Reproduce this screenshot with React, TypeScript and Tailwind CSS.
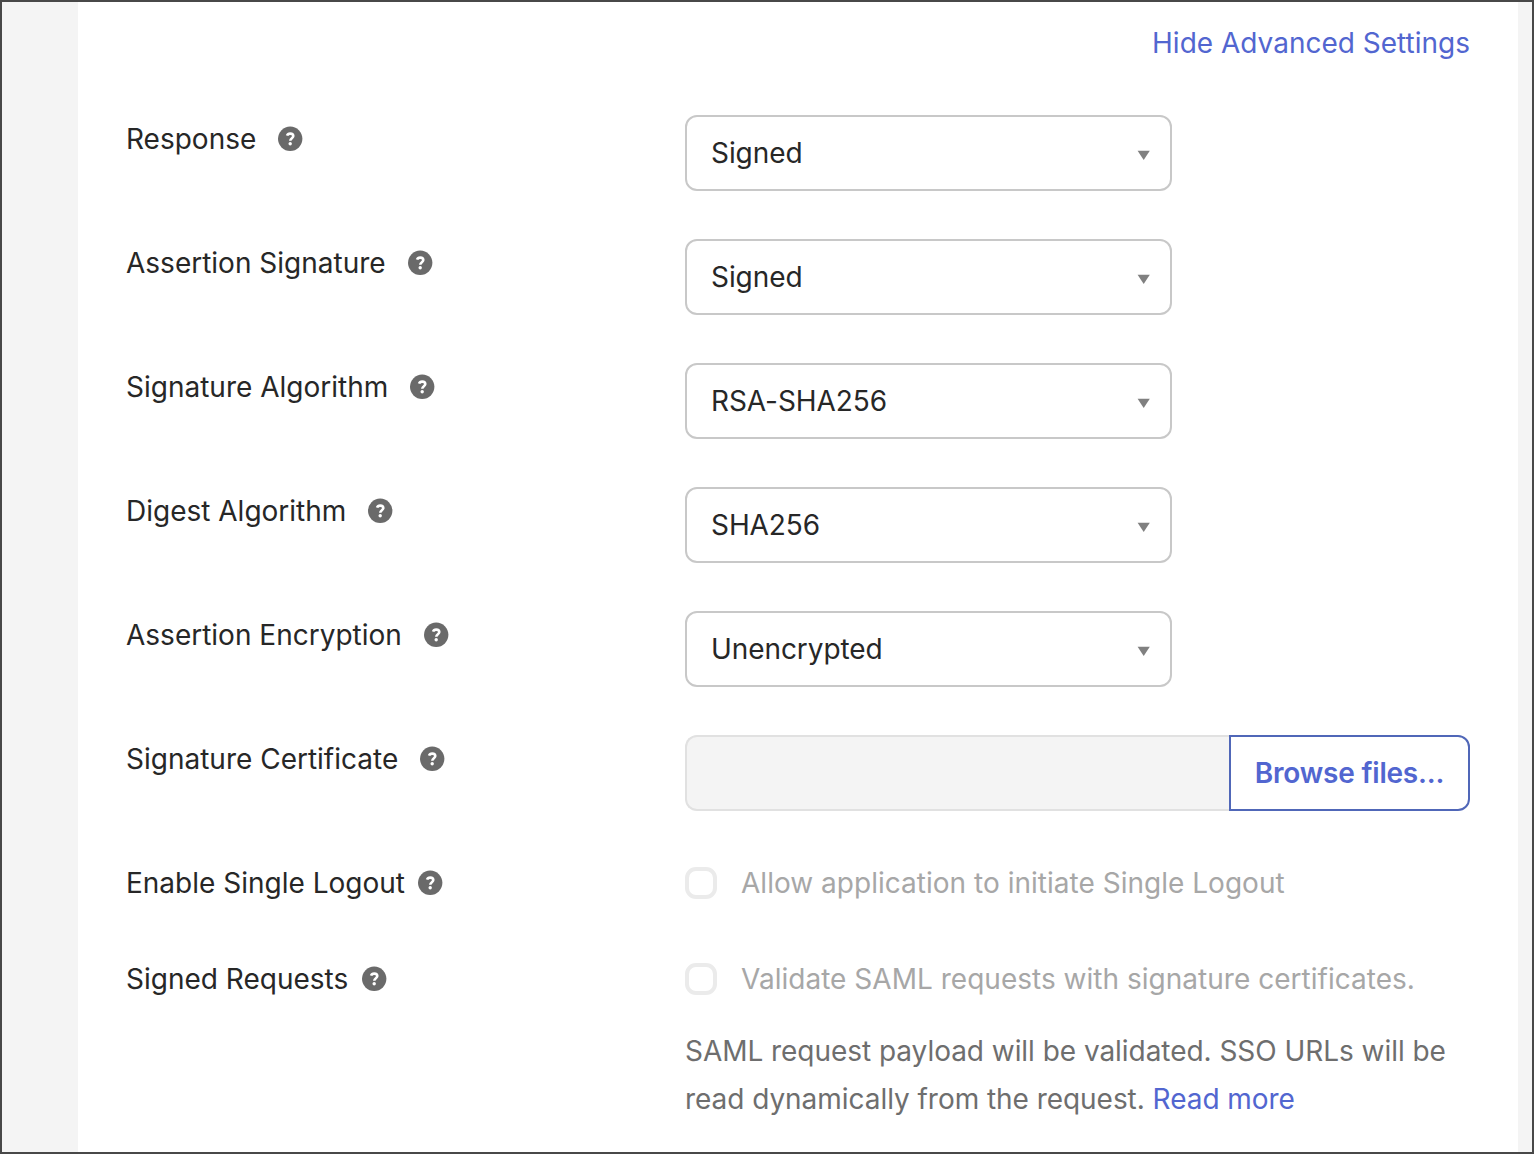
import React from "react";

const selects = [
    { label: "Response", value: "Signed" },
    { label: "Assertion Signature", value: "Signed" },
    { label: "Signature Algorithm", value: "RSA-SHA256" },
    { label: "Digest Algorithm", value: "SHA256" },
    { label: "Assertion Encryption", value: "Unencrypted" },
];

function HelpIcon({ className }: { className: string }) {
    return (
        <svg className={className} width="25" height="25" viewBox="0 0 25 25" fill="none">
            <circle cx="12.2" cy="12.8" r="12.2" fill="#6a6a6a"/>
            <path d="M9.1 9.7c.4-1.4 1.6-2.1 3.1-2.1 1.8 0 3.1 1 3.1 2.5 0 2.1-3 2.1-3 4.7" stroke="#fff" strokeWidth="2.6"/>
            <circle cx="12.2" cy="17.8" r="1.7" fill="#fff"/>
        </svg>
    );
}

function Label({ text, tight }: { text: string; tight?: boolean }) {
    return (
        <div className="flex h-12 w-[559px] shrink-0 items-center">
            <span>{text}</span>
            <HelpIcon className={tight ? "mb-px ml-[13.5px]" : "mb-px ml-[22px]"}/>
        </div>
    );
}

function Checkbox({ text }: { text: string }) {
    return (
        <div className="flex h-12 items-center">
            <span className="h-8 w-8 rounded-[11px] border-4 border-[#ebebeb]"></span>
            <span className="ml-6 whitespace-nowrap tracking-[0.02px] text-[#a7a7a7]">{text}</span>
        </div>
    );
}

export default function App() {
    return (
        <div className="h-[1154px] w-[1534px] overflow-hidden border-2 border-[#484848] bg-[#f4f4f4] pl-[76px] pr-[14px] font-['Inter',sans-serif] text-[28px] leading-[48px] text-[#272727]">
            <div className="h-full bg-white pl-12 pr-12 pt-[17px]">
                <div className="flex justify-end">
                    <a href="#" className="text-[#5266d0]">Hide Advanced Settings</a>
                </div>

                <div className="mt-12 flex flex-col gap-12">
                    {selects.map((s) => (
                        <div key={s.label} className="flex h-[76px]">
                            <Label text={s.label}/>
                            <div className="flex w-[487px] items-center justify-between rounded-[12px] border-2 border-[#c8c8c8] pl-6 pr-5">
                                <span className="tracking-[-0.08px]">{s.value}</span>
                                <svg className="mt-1" width="13" height="10" viewBox="0 0 13 10">
                                    <path d="M.6.8h12.2L6.7 10z" fill="#808080"/>
                                </svg>
                            </div>
                        </div>
                    ))}

                    <div className="flex h-[76px]">
                        <Label text="Signature Certificate"/>
                        <div className="flex w-[785px]">
                            <div className="flex-1 rounded-l-[12px] border-2 border-r-0 border-[#e1e1e1] bg-[#f4f4f4]"></div>
                            <button className="w-[241px] rounded-r-[12px] border-2 border-[#5067b8] font-semibold tracking-[-0.2px] text-[#5266d0]">
                                Browse files...
                            </button>
                        </div>
                    </div>

                    <div className="flex">
                        <Label text="Enable Single Logout" tight/>
                        <Checkbox text="Allow application to initiate Single Logout"/>
                    </div>

                    <div className="flex">
                        <Label text="Signed Requests" tight/>
                        <div>
                            <Checkbox text="Validate SAML requests with signature certificates."/>
                            <p className="mt-6 whitespace-nowrap tracking-[-0.045px] text-[#6e6e6e]">
                                SAML request payload will be validated. SSO URLs will be<br/>
                                read dynamically from the request. <a href="#" className="text-[#5266d0]">Read more</a>
                            </p>
                        </div>
                    </div>
                </div>
            </div>
        </div>
    );
}
